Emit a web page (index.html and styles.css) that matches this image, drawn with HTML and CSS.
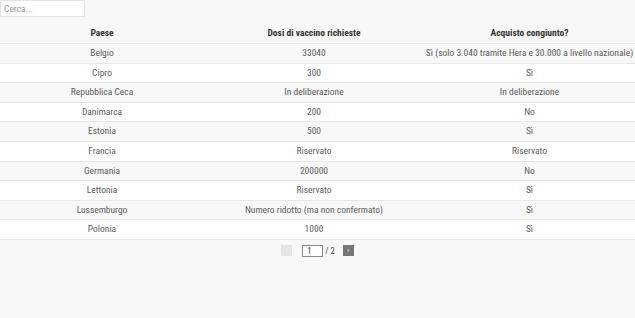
FILE: index.html
```html
<!DOCTYPE html>
<html lang="it">
<head>
<meta charset="utf-8">
<title>Vaccini</title>
<link rel="stylesheet" href="styles.css">
</head>
<body>
<div class="page">
  <input class="search" type="text" placeholder="Cerca...">
  <table class="grid">
    <colgroup>
      <col class="c1"><col class="c2"><col class="c3">
    </colgroup>
    <thead>
      <tr><th>Paese</th><th>Dosi di vaccino richieste</th><th>Acquisto congiunto?</th></tr>
    </thead>
    <tbody>
      <tr><td>Belgio</td><td>33040</td><td>Sì (solo 3.040 tramite Hera e 30.000 a livello nazionale)</td></tr>
      <tr><td>Cipro</td><td>300</td><td>Sì</td></tr>
      <tr><td>Repubblica Ceca</td><td>In deliberazione</td><td>In deliberazione</td></tr>
      <tr><td>Danimarca</td><td>200</td><td>No</td></tr>
      <tr><td>Estonia</td><td>500</td><td>Sì</td></tr>
      <tr><td>Francia</td><td>Riservato</td><td>Riservato</td></tr>
      <tr><td>Germania</td><td>200000</td><td>No</td></tr>
      <tr><td>Lettonia</td><td>Riservato</td><td>Sì</td></tr>
      <tr><td>Lussemburgo</td><td>Numero ridotto (ma non confermato)</td><td>Sì</td></tr>
      <tr><td>Polonia</td><td>1000</td><td>Sì</td></tr>
    </tbody>
  </table>
  <div class="pager">
    <button class="pbtn prev" type="button">‹</button>
    <input class="pinput" type="text" value="1">
    <span class="ptotal">/ 2</span>
    <button class="pbtn next" type="button">›</button>
  </div>
</div>
</body>
</html>
```
FILE: styles.css
```css
html, body {
  margin: 0;
  padding: 0;
  background: #f8f8f8;
}
body {
  font-family: "Roboto Condensed", "Liberation Sans Narrow", "DejaVu Sans Condensed", Roboto, sans-serif;
  font-size: 9.5px;
  color: #5a5a5a;
}
.page {
  width: 635px;
}
.search {
  display: block;
  box-sizing: border-box;
  width: 85px;
  height: 17px;
  margin: 0;
  padding: 0 3px;
  border: 1px solid #e4e4e4;
  background: #fff;
  font-family: inherit;
  font-size: 9.5px;
  color: #555;
  outline: none;
}
.search::placeholder {
  color: #9a9a9a;
}
.grid {
  width: 635px;
  margin-top: 5px;
  border-collapse: collapse;
  table-layout: fixed;
}
.c1 { width: 204px; }
.c2 { width: 220px; }
.c3 { width: 211px; }
.grid th, .grid td {
  text-align: center;
  white-space: nowrap;
}
.grid th {
  font-weight: bold;
  color: #333;
  line-height: 11px;
  padding: 5px 0 5px;
  border-bottom: 1px solid #e6e6e6;
}
.grid td {
  line-height: 10.6px;
  padding: 4px 0 4px;
  border-bottom: 1px solid #e6e6e6;
}
.grid tbody tr:nth-child(odd) {
  background: #f8f8f8;
}
.grid tbody tr:nth-child(even) {
  background: #fff;
}
.pager {
  display: flex;
  align-items: center;
  justify-content: center;
  padding-top: 5px;
}
.pbtn {
  width: 11px;
  height: 11px;
  padding: 0;
  border: none;
  font-size: 8px;
  line-height: 11px;
  color: #fff;
  font-family: inherit;
}
.prev {
  background: #e4e4e4;
  color: #f4f4f4;
}
.next {
  background: #777;
  margin-left: 8px;
}
.pinput {
  box-sizing: border-box;
  width: 21px;
  height: 12px;
  margin-left: 10px;
  padding: 0 0 0 4px;
  border: 1px solid #888;
  background: #fff;
  font-family: inherit;
  font-size: 8.5px;
  color: #333;
}
.ptotal {
  margin-left: 2px;
  font-size: 8.5px;
  color: #444;
}
```
